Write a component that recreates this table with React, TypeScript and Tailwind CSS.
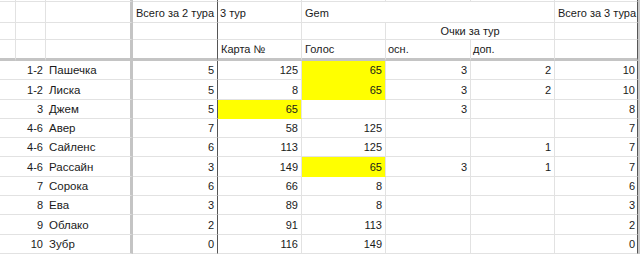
import type { ReactNode } from 'react';

// строки таблицы: место, ник, очки за 2 тура, карта, голос, осн., доп., всего
type Row = {
  rank: string;
  name: string;
  prev: string;
  card: string;
  vote: string;
  main: string;
  extra: string;
  total: string;
  cardYellow?: boolean;
  voteYellow?: boolean;
};

const rows: Row[] = [
  { rank: '1-2', name: 'Пашечка', prev: '5', card: '125', vote: '65', main: '3', extra: '2', total: '10', voteYellow: true },
  { rank: '1-2', name: 'Лиска', prev: '5', card: '8', vote: '65', main: '3', extra: '2', total: '10', voteYellow: true },
  { rank: '3', name: 'Джем', prev: '5', card: '65', vote: '', main: '3', extra: '', total: '8', cardYellow: true },
  { rank: '4-6', name: 'Авер', prev: '7', card: '58', vote: '125', main: '', extra: '', total: '7' },
  { rank: '4-6', name: 'Сайленс', prev: '6', card: '113', vote: '125', main: '', extra: '1', total: '7' },
  { rank: '4-6', name: 'Рассайн', prev: '3', card: '149', vote: '65', main: '3', extra: '1', total: '7', voteYellow: true },
  { rank: '7', name: 'Сорока', prev: '6', card: '66', vote: '8', main: '', extra: '', total: '6' },
  { rank: '8', name: 'Ева', prev: '3', card: '89', vote: '8', main: '', extra: '', total: '3' },
  { rank: '9', name: 'Облако', prev: '2', card: '91', vote: '113', main: '', extra: '', total: '2' },
  { rank: '10', name: 'Зубр', prev: '0', card: '116', vote: '149', main: '', extra: '', total: '0' },
];

function Cell({ className = '', children }: { className?: string; children?: ReactNode }) {
  return (
    <div className={`flex items-end whitespace-nowrap overflow-visible border-b border-r border-[#e2e2e2] ${className}`}>
      {children}
    </div>
  );
}

export default function App() {
  return (
    <div className="w-[640px] h-[254px] overflow-hidden bg-white text-[11px] leading-[13px] text-[#1a1a1a]" style={{ fontFamily: '"Liberation Sans", Arial, sans-serif' }}>
      <div className="grid grid-cols-[16px_30px_87px_85px_84px_84px_85px_84px_83px_2px]">
        {/* верхняя обрезанная строка */}
        <Cell className="h-[2px]" />
        <Cell className="h-[2px]" />
        <Cell className="h-[2px] border-r-[3px] border-r-[#c4c4c4]" />
        <Cell className="h-[2px] border-r-[#555]" />
        <Cell className="h-[2px]" />
        <Cell className="h-[2px]" />
        <Cell className="h-[2px]" />
        <Cell className="h-[2px]" />
        <Cell className="h-[2px] border-r-[#555]" />
        <div className="h-[2px] bg-[#c8c8c8]" />

        {/* шапка 1 */}
        <Cell className="h-[21px]" />
        <Cell className="h-[21px]" />
        <Cell className="h-[21px] border-r-[3px] border-r-[#c4c4c4]" />
        <Cell className="h-[21px] pl-[3px] pb-[2px] border-r-[#555]">Всего за 2 тура</Cell>
        <Cell className="h-[21px] pl-[2px] pb-[2px]">3 тур</Cell>
        <Cell className="col-span-3 h-[21px] pl-[3px] pb-[2px]">Gem</Cell>
        <Cell className="h-[21px] pl-[3px] pb-[2px] border-r-[#555]">Всего за 3 тура</Cell>
        <div className="h-[21px] bg-[#c8c8c8]" />

        {/* шапка 2 */}
        <Cell className="h-[17px]" />
        <Cell className="h-[17px]" />
        <Cell className="h-[17px] border-r-[3px] border-r-[#c4c4c4]" />
        <Cell className="h-[17px] border-r-[#555]" />
        <Cell className="h-[17px]" />
        <Cell className="h-[17px]" />
        <Cell className="col-span-2 h-[17px] justify-center pb-[1px]">Очки за тур</Cell>
        <Cell className="h-[17px] border-r-[#555]" />
        <div className="h-[17px] bg-[#c8c8c8]" />

        {/* шапка 3 */}
        <Cell className="h-[21px] border-b-[3px] border-b-[#c4c4c4]" />
        <Cell className="h-[21px] border-b-[3px] border-b-[#c4c4c4]" />
        <Cell className="h-[21px] border-b-[3px] border-b-[#c4c4c4] border-r-[3px] border-r-[#c4c4c4]" />
        <Cell className="h-[21px] border-b-[3px] border-b-[#c4c4c4] border-r-[#555]" />
        <Cell className="h-[21px] pl-[3px] pb-[2px] border-b-[3px] border-b-[#c4c4c4]">Карта №</Cell>
        <Cell className="h-[21px] pl-[3px] pb-[2px] border-b-[3px] border-b-[#c4c4c4]">Голос</Cell>
        <Cell className="h-[21px] pl-[2px] pb-[2px] border-b-[3px] border-b-[#c4c4c4]">осн.</Cell>
        <Cell className="h-[21px] pl-[2px] pb-[2px] border-b-[3px] border-b-[#c4c4c4]">доп.</Cell>
        <Cell className="h-[21px] border-b-[3px] border-b-[#c4c4c4] border-r-[#555]" />
        <div className="h-[21px] bg-[#c8c8c8]" />

        {/* данные */}
        {rows.map((r) => (
          <div key={r.name} className="contents">
            <Cell className="col-span-2 h-[19.3px] justify-end pr-[3px] pb-[2px] border-r-0">{r.rank}</Cell>
            <Cell className="h-[19.3px] pl-[3px] pb-[2px] border-r-[3px] border-r-[#c4c4c4]">
              <span className="text-[11.5px]">{r.name}</span>
            </Cell>
            <Cell className="h-[19.3px] justify-end pr-[3px] pb-[2px] border-r-[#555]">{r.prev}</Cell>
            <Cell className={`h-[19.3px] justify-end pr-[3px] pb-[2px] ${r.cardYellow ? 'bg-[#ffff00] border-b-[#ffff00]' : ''}`}>{r.card}</Cell>
            <Cell className={`h-[19.3px] justify-end pr-[3px] pb-[2px] ${r.voteYellow ? 'bg-[#ffff00] border-b-[#ffff00]' : ''}`}>{r.vote}</Cell>
            <Cell className="h-[19.3px] justify-end pr-[3px] pb-[2px]">{r.main}</Cell>
            <Cell className="h-[19.3px] justify-end pr-[3px] pb-[2px]">{r.extra}</Cell>
            <Cell className="h-[19.3px] justify-end pr-[2px] pb-[2px] border-r-[#555]">{r.total}</Cell>
            <div className="h-[19.3px] bg-[#c8c8c8]" />
          </div>
        ))}
      </div>
    </div>
  );
}
